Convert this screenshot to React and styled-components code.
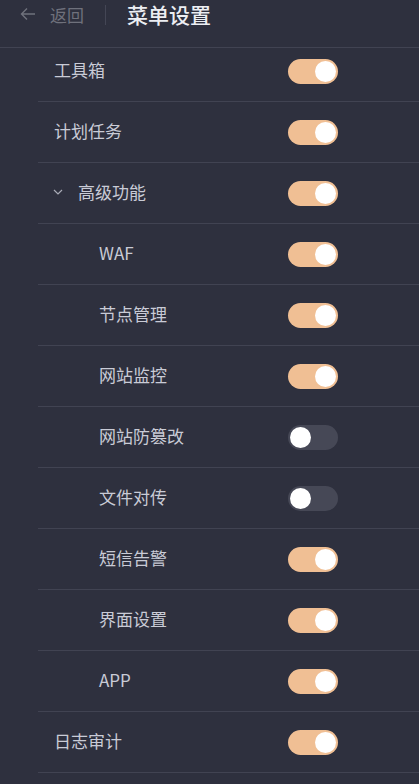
import React, { useState } from 'react';
import styled, { createGlobalStyle } from 'styled-components';

const GlobalStyle = createGlobalStyle`
    html, body {
        margin: 0;
        padding: 0;
        background: #2e303e;
    }
    body {
        font-family: "Noto Sans CJK SC", "Noto Sans", sans-serif;
        overflow: hidden;
    }
`;

const Page = styled.div`
    width: 419px;
    height: 784px;
    background: #2e303e;
    overflow: hidden;
`;

const Header = styled.div`
    height: 48px;
    box-sizing: border-box;
    border-bottom: 1px solid #414352;
    display: flex;
    align-items: flex-start;
`;

const Back = styled.div`
    display: flex;
    align-items: center;
    gap: 14px;
    height: 28px;
    padding-left: 20px;
    padding-right: 21px;
    color: #6f717c;
    font-size: 17px;
`;

const Divider = styled.div`
    width: 1px;
    height: 20px;
    margin-top: 5px;
    background: #444655;
`;

const Title = styled.div`
    height: 28px;
    line-height: 28px;
    padding-left: 21px;
    color: #eceef3;
    font-size: 21px;
    font-weight: 500;
`;

const List = styled.div`
    margin-left: 38px;
`;

const Row = styled.div`
    box-sizing: border-box;
    height: ${(p) => (p.$clipped ? '54px' : '61px')};
    padding-bottom: ${(p) => (p.$clipped ? '7px' : '0')};
    border-bottom: 1px solid #414352;
    display: flex;
    align-items: center;
`;

const Label = styled.div`
    width: 250px;
    box-sizing: border-box;
    padding-left: ${(p) => (p.$level === 1 ? '61px' : '16px')};
    margin-bottom: 3px;
    display: flex;
    align-items: center;
    color: #c9cbd6;
    font-size: 17px;
`;

const Caret = styled.span`
    display: inline-flex;
    width: 25px;
    margin-left: -1px;
    color: #a9abb6;
`;

const Track = styled.button`
    position: relative;
    width: 50px;
    height: 25px;
    border: none;
    padding: 0;
    border-radius: 13px;
    background: ${(p) => (p.$on ? '#f0bf94' : '#464856')};
    cursor: pointer;
`;

const Knob = styled.span`
    position: absolute;
    top: 2px;
    left: ${(p) => (p.$on ? '27px' : '2px')};
    width: 21px;
    height: 21px;
    border-radius: 50%;
    background: #ffffff;
    transition: left 0.2s;
`;

const items = [
    { name: '工具箱', on: true },
    { name: '计划任务', on: true },
    { name: '高级功能', on: true, group: true },
    { name: 'WAF', on: true, level: 1 },
    { name: '节点管理', on: true, level: 1 },
    { name: '网站监控', on: true, level: 1 },
    { name: '网站防篡改', on: false, level: 1 },
    { name: '文件对传', on: false, level: 1 },
    { name: '短信告警', on: true, level: 1 },
    { name: '界面设置', on: true, level: 1 },
    { name: 'APP', on: true, level: 1 },
    { name: '日志审计', on: true },
];

const Switch = ({ on, onToggle }) => (
    <Track $on={on} onClick={onToggle}>
        <Knob $on={on} />
    </Track>
);

const App = () => {
    const [state, setState] = useState(items.map((i) => i.on));

    const toggle = (idx) => {
        setState((s) => s.map((v, i) => (i === idx ? !v : v)));
    };

    return (
        <Page>
            <GlobalStyle />
            <Header>
                <Back>
                    <svg width="16" height="16" viewBox="0 0 16 16" fill="none" stroke="currentColor" strokeWidth="1.4">
                        <path d="M15 8H1.5M7 2.5L1.5 8 7 13.5" />
                    </svg>
                    返回
                </Back>
                <Divider />
                <Title>菜单设置</Title>
            </Header>
            <List>
                {items.map((item, idx) => (
                    <Row key={item.name} $clipped={idx === 0}>
                        <Label $level={item.level}>
                            {item.group && (
                                <Caret>
                                    <svg width="10" height="10" viewBox="0 0 10 10" fill="none" stroke="currentColor" strokeWidth="1.2">
                                        <path d="M1 3l4 4 4-4" />
                                    </svg>
                                </Caret>
                            )}
                            {item.name}
                        </Label>
                        <Switch on={state[idx]} onToggle={() => toggle(idx)} />
                    </Row>
                ))}
            </List>
        </Page>
    );
};

export default App;
